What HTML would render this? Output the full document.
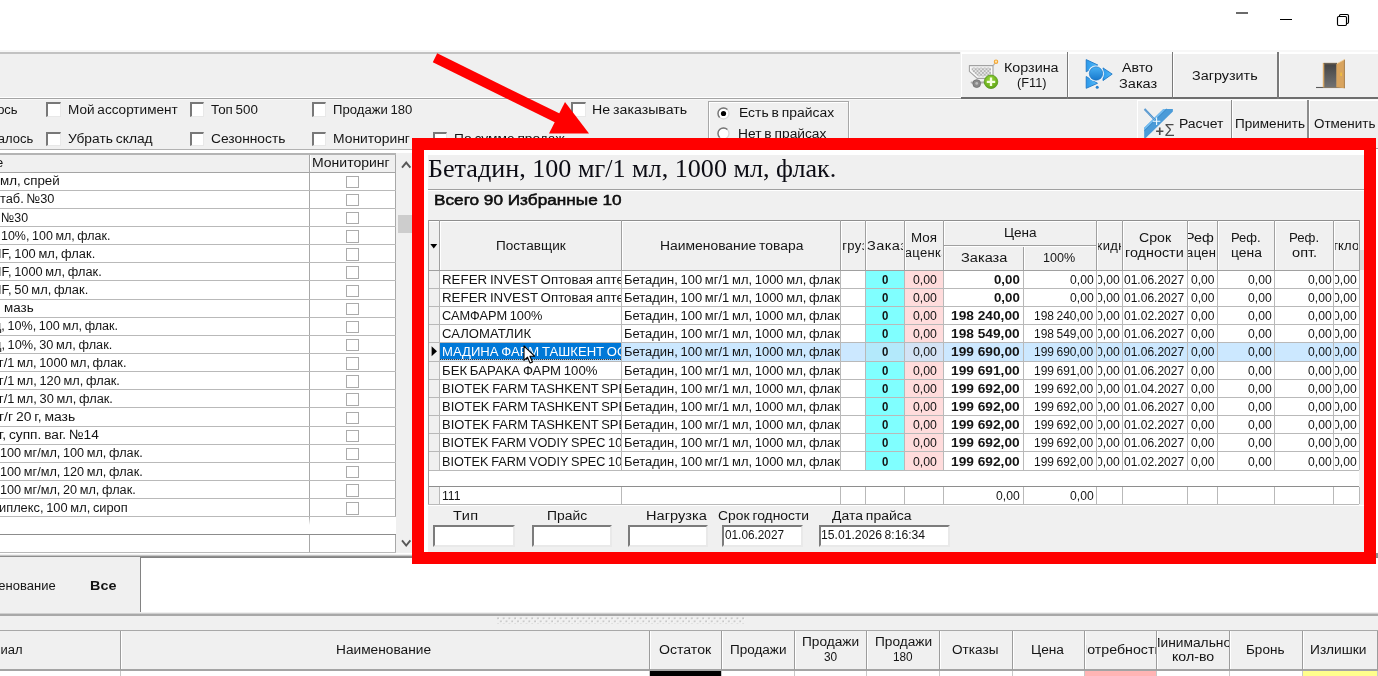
<!DOCTYPE html>
<html lang="ru"><head><meta charset="utf-8"><title>Заказ</title><style>
html,body{margin:0;padding:0}body{width:1378px;height:676px;overflow:hidden;background:#fff;position:relative;font-family:"Liberation Sans",sans-serif;font-size:13px;color:#141414}
#w{position:absolute;left:0;top:0;width:1378px;height:676px;overflow:hidden;will-change:transform}
#w div,#w svg,#w span{position:absolute}
.t{white-space:pre;transform-origin:0 12.5px;word-spacing:-.9px}
.c{overflow:hidden}
.cb{background:#fff;box-sizing:border-box;border:solid;border-width:2px 1.5px 1.5px 2px;border-color:#787878 #e8e8e8 #e8e8e8 #787878}
.cb2{width:13px;height:12.5px;box-sizing:border-box;border:1px solid #ababab;background:#fff}
.in{background:#fff;box-sizing:border-box;border:2px solid;border-color:#7c7c7c #e9e9e9 #e9e9e9 #7c7c7c}
</style></head><body><div id="w">
<div style="left:0px;top:52px;width:1378px;height:505px;background:#f0f0f0;"></div>
<div style="left:0px;top:50.4px;width:1378px;height:1.6px;background:#f7f7f7;"></div>
<div style="left:0px;top:52.2px;width:960px;height:1.7px;background:#c2c2c2;"></div>
<div style="left:0px;top:97px;width:961px;height:1px;background:#ffffff;"></div>
<div style="left:0px;top:98px;width:961px;height:1px;background:#a4a4a4;"></div>
<div style="left:0px;top:99px;width:1378px;height:1px;background:#f8f8f8;"></div>
<div style="left:1236px;top:12px;width:12px;height:1.5px;background:#6a6a6a;"></div>
<div style="left:1280.2px;top:18.6px;width:11.8px;height:1.1px;background:#000;"></div>
<svg style="left:1336px;top:13px" width="15" height="14" viewBox="0 0 15 14"><path d="M3.5 3.5V2.7Q3.5 1.5 4.7 1.5H11.3Q12.5 1.5 12.5 2.7V9.3Q12.5 10.5 11.3 10.5H10.5" fill="none" stroke="#000" stroke-width="1.15"/><rect x="1.5" y="3.5" width="9" height="9" rx="1.2" fill="#fff" stroke="#000" stroke-width="1.15"/></svg>
<div style="left:960.7px;top:52.4px;width:107.29999999999995px;height:46.50000000000001px;background:#f0f0f0;"></div>
<div style="left:960.7px;top:52.4px;width:107.3px;height:1.2px;background:#fff;"></div>
<div style="left:960.7px;top:52.4px;width:1.3px;height:46.5px;background:#fff;"></div>
<div style="left:960.7px;top:96.7px;width:107.3px;height:2.2px;background:#6e6e6e;"></div>
<div style="left:1066.5px;top:52.4px;width:1.5px;height:46.5px;background:#7a7a7a;"></div>
<div style="left:1068px;top:52.4px;width:105px;height:46.50000000000001px;background:#f0f0f0;"></div>
<div style="left:1068px;top:52.4px;width:105px;height:1.2px;background:#fff;"></div>
<div style="left:1068px;top:52.4px;width:1.3px;height:46.5px;background:#fff;"></div>
<div style="left:1068px;top:96.7px;width:105px;height:2.2px;background:#6e6e6e;"></div>
<div style="left:1171.5px;top:52.4px;width:1.5px;height:46.5px;background:#7a7a7a;"></div>
<div style="left:1173px;top:52.4px;width:105.5px;height:46.50000000000001px;background:#f0f0f0;"></div>
<div style="left:1173px;top:52.4px;width:105.5px;height:1.2px;background:#fff;"></div>
<div style="left:1173px;top:52.4px;width:1.3px;height:46.5px;background:#fff;"></div>
<div style="left:1173px;top:96.7px;width:105.5px;height:2.2px;background:#6e6e6e;"></div>
<div style="left:1277.0px;top:52.4px;width:1.5px;height:46.5px;background:#7a7a7a;"></div>
<div style="left:1278.5px;top:52.4px;width:101.5px;height:46.50000000000001px;background:#f0f0f0;"></div>
<div style="left:1278.5px;top:52.4px;width:101.5px;height:1.2px;background:#fff;"></div>
<div style="left:1278.5px;top:52.4px;width:1.3px;height:46.5px;background:#fff;"></div>
<div style="left:1278.5px;top:96.7px;width:101.5px;height:2.2px;background:#6e6e6e;"></div>
<div style="left:1378.5px;top:52.4px;width:1.5px;height:46.5px;background:#7a7a7a;"></div>
<span class="t" style="left:1003.69px;top:60.00px;font-size:13px;line-height:16px;transform:scale(1.1019,1.04);">Корзина</span>
<span class="t" style="left:1016.59px;top:75.25px;font-size:13px;line-height:16px;transform:scale(0.9808,1.04);">(F11)</span>
<span class="t" style="left:1122.34px;top:60.00px;font-size:13px;line-height:16px;transform:scale(1.0912,1.04);">Авто</span>
<span class="t" style="left:1118.84px;top:75.50px;font-size:13px;line-height:16px;transform:scale(1.1193,1.04);">Заказ</span>
<span class="t" style="left:1192.09px;top:68.00px;font-size:13px;line-height:16px;transform:scale(1.1065,1.04);">Загрузить</span>
<div style="left:1137px;top:100px;width:95px;height:40px;background:#f0f0f0;"></div>
<div style="left:1137px;top:100px;width:95px;height:1px;background:#fff;"></div>
<div style="left:1137px;top:100px;width:1px;height:40px;background:#fff;"></div>
<div style="left:1230.5px;top:100px;width:1.5px;height:40px;background:#8c8c8c;"></div>
<div style="left:1232px;top:100px;width:76.5px;height:40px;background:#f0f0f0;"></div>
<div style="left:1232px;top:100px;width:76.5px;height:1px;background:#fff;"></div>
<div style="left:1232px;top:100px;width:1px;height:40px;background:#fff;"></div>
<div style="left:1307.0px;top:100px;width:1.5px;height:40px;background:#8c8c8c;"></div>
<div style="left:1308.5px;top:100px;width:71.5px;height:40px;background:#f0f0f0;"></div>
<div style="left:1308.5px;top:100px;width:71.5px;height:1px;background:#fff;"></div>
<div style="left:1308.5px;top:100px;width:1px;height:40px;background:#fff;"></div>
<div style="left:1378.5px;top:100px;width:1.5px;height:40px;background:#8c8c8c;"></div>
<span class="t" style="left:1178.84px;top:116.25px;font-size:13px;line-height:16px;transform:scale(1.0742,1.04);">Расчет</span>
<span class="t" style="left:1235.09px;top:116.25px;font-size:13px;line-height:16px;transform:scale(1.0411,1.04);">Применить</span>
<span class="t" style="left:1314.34px;top:116.25px;font-size:13px;line-height:16px;transform:scale(1.0341,1.04);">Отменить</span>
<svg style="left:964px;top:54px" width="40" height="40" viewBox="0 0 40 40">
<defs><pattern id="chk" width="3.6" height="3.6" patternUnits="userSpaceOnUse"><rect width="3.6" height="3.6" fill="#e6e6e6"/><rect width="1.8" height="1.8" fill="#b4b4b4"/><rect x="1.8" y="1.8" width="1.8" height="1.8" fill="#b4b4b4"/></pattern>
<radialGradient id="grn" cx="0.45" cy="0.35" r="0.7"><stop offset="0" stop-color="#9ad83c"/><stop offset="1" stop-color="#5aa012"/></radialGradient></defs>
<path d="M29.2 11.5L31.6 8.4" stroke="#b8b8b8" stroke-width="1.3" fill="none"/>
<path d="M5.4 11.6H29V24.4H13.2L5.4 17.4Z" fill="#fafafa" stroke="#a2a2a2" stroke-width="1.1" stroke-linejoin="round"/>
<path d="M7.6 13.6H27V22.6H14L7.6 16.8Z" fill="url(#chk)"/>
<path d="M7.6 28.4H24" stroke="#b0b0b0" stroke-width="2" stroke-linecap="round"/>
<circle cx="12.7" cy="29.6" r="3.9" fill="#8a8a8a" stroke="#6c6c6c" stroke-width="0.8"/><circle cx="12.7" cy="29.4" r="1.4" fill="#bdbdbd"/>
<circle cx="32" cy="7.7" r="1.7" fill="#fde4b0" stroke="#f4a632" stroke-width="1.1"/>
<circle cx="27" cy="27.8" r="6.8" fill="url(#grn)" stroke="#4c9010" stroke-width="0.7"/>
<path d="M27 23.6V32M22.8 27.8H31.2" stroke="#f4ffe0" stroke-width="2.3"/>
</svg>
<svg style="left:1080px;top:54px" width="40" height="40" viewBox="0 0 40 40">
<defs><linearGradient id="bl" x1="0" y1="0" x2="0" y2="1"><stop offset="0" stop-color="#46b0f4"/><stop offset="1" stop-color="#1878cc"/></linearGradient>
<linearGradient id="bt" x1="0" y1="0" x2="1" y2="0"><stop offset="0" stop-color="#2a98ea"/><stop offset="1" stop-color="#58bcf8"/></linearGradient></defs>
<path d="M6.2 5.6V17.8L17.8 11Z" fill="url(#bt)" stroke="#1f78c6" stroke-width="0.9" stroke-linejoin="round"/>
<path d="M6.2 22.5V34.3L17.5 29.3Z" fill="url(#bt)" stroke="#1f78c6" stroke-width="0.9" stroke-linejoin="round"/>
<path d="M23 13.9V26.6L32.2 20.1Z" fill="url(#bt)" stroke="#1f78c6" stroke-width="0.9" stroke-linejoin="round"/>
<circle cx="16" cy="19.5" r="8.1" fill="#e6f4fd"/>
<circle cx="16" cy="19.5" r="6.7" fill="url(#bl)" stroke="#1a6cb8" stroke-width="0.6"/>
<circle cx="17.2" cy="33.2" r="1.5" fill="#2480d0"/>
</svg>
<svg style="left:1308px;top:54px" width="40" height="40" viewBox="0 0 40 40">
<defs><linearGradient id="dk" x1="0" y1="0" x2="0" y2="1"><stop offset="0" stop-color="#444"/><stop offset="1" stop-color="#727272"/></linearGradient></defs>
<path d="M8 33.5H36.5" stroke="#5a5a5a" stroke-width="1.1"/>
<rect x="14.8" y="8.9" width="14.4" height="24.6" fill="#d8a866"/><rect x="15.8" y="8.9" width="13.2" height="1.2" fill="#6a6256"/>
<rect x="16.3" y="10.1" width="12" height="23.4" fill="url(#dk)"/>
<path d="M29 9.6L36.8 5.3V34.3L29 33.4Z" fill="#d9a45e"/>
<path d="M35.9 5.8L36.8 5.3V34.3L35.9 34.2Z" fill="#a47c4c"/>
<path d="M29 9.6L36.8 5.3" stroke="#f4d8a8" stroke-width="0.8"/>
<rect x="32.4" y="18.6" width="1.4" height="3.4" fill="#f2c23c"/>
</svg>
<svg style="left:1138px;top:100px" width="40" height="38" viewBox="0 0 40 38">
<path d="M25.4 8.9H34.9V11.5L7.7 38H6.2V27.8Z" fill="#4b9bd8"/>
<path d="M25.4 8.9H28.2L6.2 30.6V27.8Z" fill="#74bcf0"/>
<path d="M28.6 8.9L6.2 31" stroke="#2f7fc0" stroke-width="0.7" fill="none"/>
<path d="M6.5 9L16.4 19.4" stroke="#3c86c6" stroke-width="1.9"/><path d="M6.5 9L16.4 19.4" stroke="#bcdcf4" stroke-width="0.5"/>
<path d="M18.6 17.6V25M14.9 21.3H22.3" stroke="#f2fbff" stroke-width="1.1"/>
<text x="17.6" y="35.8" font-family="Liberation Sans, sans-serif" font-size="14.5" fill="#4a4a4a"><tspan font-weight="700">+</tspan><tspan x="26.4" font-size="16.4">Σ</tspan></text>
</svg>

<div class="cb" style="left:46.25px;top:102px;width:14.5px;height:14.5px"></div>
<div class="cb" style="left:189.5px;top:102px;width:14.5px;height:14.5px"></div>
<div class="cb" style="left:311.5px;top:102px;width:14.5px;height:14.5px"></div>
<div class="cb" style="left:46.25px;top:131.5px;width:14.5px;height:14.5px"></div>
<div class="cb" style="left:189.5px;top:131.5px;width:14.5px;height:14.5px"></div>
<div class="cb" style="left:311.5px;top:131.5px;width:14.5px;height:14.5px"></div>
<div class="cb" style="left:432.5px;top:131.5px;width:14.5px;height:14.5px"></div>
<div class="cb" style="left:571.25px;top:102px;width:14.5px;height:14.5px"></div>
<span class="t" style="left:-2.87px;top:101.50px;font-size:13px;line-height:16px;transform:scale(1.0000,1.04);">ось</span>
<span class="t" style="left:-2.32px;top:130.75px;font-size:13px;line-height:16px;transform:scale(1.0000,1.04);">алось</span>
<span class="t" style="left:67.84px;top:101.50px;font-size:13px;line-height:16px;transform:scale(1.0421,1.04);">Мой ассортимент</span>
<span class="t" style="left:67.84px;top:130.75px;font-size:13px;line-height:16px;transform:scale(1.0614,1.04);">Убрать склад</span>
<span class="t" style="left:211.09px;top:101.50px;font-size:13px;line-height:16px;transform:scale(1.0290,1.04);">Топ 500</span>
<span class="t" style="left:211.09px;top:130.75px;font-size:13px;line-height:16px;transform:scale(1.0602,1.04);">Сезонность</span>
<span class="t" style="left:332.84px;top:101.50px;font-size:13px;line-height:16px;transform:scale(1.0092,1.04);">Продажи 180</span>
<span class="t" style="left:332.84px;top:130.75px;font-size:13px;line-height:16px;transform:scale(1.0669,1.04);">Мониторинг</span>
<span class="t" style="left:453.59px;top:130.75px;font-size:13px;line-height:16px;transform:scale(1.0572,1.04);">По сумме продаж</span>
<span class="t" style="left:591.59px;top:101.50px;font-size:13px;line-height:16px;transform:scale(1.0899,1.04);">Не заказывать</span>
<div style="left:707.6px;top:101px;width:139.6px;height:50px;border:1px solid #a8a8a8;box-shadow:inset 1px 1px 0 #fff,1px 1px 0 #fff;background:none"></div>
<svg style="left:716.5px;top:106.75px" width="13" height="13"><circle cx="6.5" cy="6.5" r="5.5" fill="#fff" stroke="#d8d8d8" stroke-width="1.3"/><path d="M2.6 10.4A5.5 5.5 0 0 1 10.4 2.6" fill="none" stroke="#767676" stroke-width="1.4"/><circle cx="6.5" cy="6.5" r="2.6" fill="#000"/></svg>
<svg style="left:716.5px;top:127.0px" width="13" height="13"><circle cx="6.5" cy="6.5" r="5.5" fill="#fff" stroke="#d8d8d8" stroke-width="1.3"/><path d="M2.6 10.4A5.5 5.5 0 0 1 10.4 2.6" fill="none" stroke="#767676" stroke-width="1.4"/></svg>
<span class="t" style="left:738.59px;top:105.00px;font-size:13px;line-height:16px;transform:scale(1.0685,1.04);">Есть в прайсах</span>
<span class="t" style="left:738.09px;top:125.75px;font-size:13px;line-height:16px;transform:scale(1.0594,1.04);">Нет в прайсах</span>
<div style="left:0px;top:153px;width:396px;height:401px;background:#fff;"></div>
<div style="left:0px;top:149px;width:412px;height:1.3px;background:#b2b2b2;"></div>
<div style="left:0px;top:150.3px;width:412px;height:3px;background:#fff;"></div>
<div style="left:0px;top:153.2px;width:396px;height:1.6px;background:#b4b4b4;"></div>
<div style="left:0px;top:154.8px;width:396px;height:17px;background:#f0f0f0;"></div>
<div style="left:0px;top:171.5px;width:396px;height:1.4px;background:#a4a4a4;"></div>
<div style="left:309px;top:154.8px;width:1px;height:362.2px;background:#a8a8a8;"></div>
<div style="left:310px;top:154.8px;width:1px;height:16.7px;background:#fff;"></div>
<div style="left:309px;top:534px;width:1px;height:19px;background:#a8a8a8;"></div>
<div style="left:395px;top:154.8px;width:1px;height:362.2px;background:#a8a8a8;"></div>
<div style="left:395px;top:534px;width:1px;height:19px;background:#a8a8a8;"></div>
<div style="left:309px;top:517px;width:1px;height:8px;background:linear-gradient(#a8a8a8,#fff)"></div>
<span class="t" style="left:-4.08px;top:155.25px;font-size:13px;line-height:16px;transform:scale(1.0000,1.04);">е</span>
<span class="t" style="left:311.59px;top:155.25px;font-size:13px;line-height:16px;transform:scale(1.0773,1.04);">Мониторинг</span>
<div style="left:0px;top:190px;width:396px;height:1px;background:#b9b9b9;"></div>
<span class="t" style="left:0.39px;top:173.25px;font-size:13px;line-height:16px;transform:scale(1.0279,1.04);">мл, спрей</span>
<div class="cb2" style="left:345.5px;top:175.6px"></div>
<div style="left:0px;top:208px;width:396px;height:1px;background:#b9b9b9;"></div>
<span class="t" style="left:0.39px;top:191.39px;font-size:13px;line-height:16px;transform:scale(0.9857,1.04);">таб. №30</span>
<div class="cb2" style="left:345.5px;top:193.7px"></div>
<div style="left:0px;top:226px;width:396px;height:1px;background:#b9b9b9;"></div>
<span class="t" style="left:1.09px;top:209.54px;font-size:13px;line-height:16px;transform:scale(0.9516,1.04);">№30</span>
<div class="cb2" style="left:345.5px;top:211.9px"></div>
<div style="left:0px;top:244px;width:396px;height:1px;background:#b9b9b9;"></div>
<span class="t" style="left:1.49px;top:227.68px;font-size:13px;line-height:16px;transform:scale(0.9589,1.04);">10%, 100 мл, флак.</span>
<div class="cb2" style="left:345.5px;top:230.0px"></div>
<div style="left:0px;top:262px;width:396px;height:1px;background:#b9b9b9;"></div>
<span class="t" style="left:-2.31px;top:245.83px;font-size:13px;line-height:16px;transform:scale(0.9899,1.04);">IF, 100 мл, флак.</span>
<div class="cb2" style="left:345.5px;top:248.2px"></div>
<div style="left:0px;top:280px;width:396px;height:1px;background:#b9b9b9;"></div>
<span class="t" style="left:-2.31px;top:263.97px;font-size:13px;line-height:16px;transform:scale(0.9837,1.04);">IF, 1000 мл, флак.</span>
<div class="cb2" style="left:345.5px;top:266.3px"></div>
<div style="left:0px;top:299px;width:396px;height:1px;background:#b9b9b9;"></div>
<span class="t" style="left:-2.31px;top:282.12px;font-size:13px;line-height:16px;transform:scale(0.9917,1.04);">IF, 50 мл, флак.</span>
<div class="cb2" style="left:345.5px;top:284.5px"></div>
<div style="left:0px;top:317px;width:396px;height:1px;background:#b9b9b9;"></div>
<span class="t" style="left:3.69px;top:300.26px;font-size:13px;line-height:16px;transform:scale(1.0300,1.04);">мазь</span>
<div class="cb2" style="left:345.5px;top:302.6px"></div>
<div style="left:0px;top:335px;width:396px;height:1px;background:#b9b9b9;"></div>
<span class="t" style="left:-6.41px;top:318.41px;font-size:13px;line-height:16px;transform:scale(0.9695,1.04);">д, 10%, 100 мл, флак.</span>
<div class="cb2" style="left:345.5px;top:320.8px"></div>
<div style="left:0px;top:353px;width:396px;height:1px;background:#b9b9b9;"></div>
<span class="t" style="left:-6.41px;top:336.55px;font-size:13px;line-height:16px;transform:scale(0.9788,1.04);">д, 10%, 30 мл, флак.</span>
<div class="cb2" style="left:345.5px;top:338.9px"></div>
<div style="left:0px;top:371px;width:396px;height:1px;background:#b9b9b9;"></div>
<span class="t" style="left:-1.11px;top:354.70px;font-size:13px;line-height:16px;transform:scale(0.9791,1.04);">г/1 мл, 1000 мл, флак.</span>
<div class="cb2" style="left:345.5px;top:357.1px"></div>
<div style="left:0px;top:389px;width:396px;height:1px;background:#b9b9b9;"></div>
<span class="t" style="left:-1.11px;top:372.84px;font-size:13px;line-height:16px;transform:scale(0.9838,1.04);">г/1 мл, 120 мл, флак.</span>
<div class="cb2" style="left:345.5px;top:375.2px"></div>
<div style="left:0px;top:407px;width:396px;height:1px;background:#b9b9b9;"></div>
<span class="t" style="left:-1.11px;top:390.99px;font-size:13px;line-height:16px;transform:scale(0.9848,1.04);">г/1 мл, 30 мл, флак.</span>
<div class="cb2" style="left:345.5px;top:393.3px"></div>
<div style="left:0px;top:426px;width:396px;height:1px;background:#b9b9b9;"></div>
<span class="t" style="left:-1.11px;top:409.13px;font-size:13px;line-height:16px;transform:scale(1.0704,1.04);">г/г 20 г, мазь</span>
<div class="cb2" style="left:345.5px;top:411.5px"></div>
<div style="left:0px;top:444px;width:396px;height:1px;background:#b9b9b9;"></div>
<span class="t" style="left:-1.31px;top:427.28px;font-size:13px;line-height:16px;transform:scale(1.0534,1.04);">г, супп. ваг. №14</span>
<div class="cb2" style="left:345.5px;top:429.6px"></div>
<div style="left:0px;top:462px;width:396px;height:1px;background:#b9b9b9;"></div>
<span class="t" style="left:-0.51px;top:445.42px;font-size:13px;line-height:16px;transform:scale(0.9754,1.04);">100 мг/мл, 100 мл, флак.</span>
<div class="cb2" style="left:345.5px;top:447.8px"></div>
<div style="left:0px;top:480px;width:396px;height:1px;background:#b9b9b9;"></div>
<span class="t" style="left:-0.51px;top:463.57px;font-size:13px;line-height:16px;transform:scale(0.9754,1.04);">100 мг/мл, 120 мл, флак.</span>
<div class="cb2" style="left:345.5px;top:465.9px"></div>
<div style="left:0px;top:498px;width:396px;height:1px;background:#b9b9b9;"></div>
<span class="t" style="left:-0.51px;top:481.71px;font-size:13px;line-height:16px;transform:scale(0.9758,1.04);">100 мг/мл, 20 мл, флак.</span>
<div class="cb2" style="left:345.5px;top:484.1px"></div>
<div style="left:0px;top:516px;width:396px;height:1px;background:#b9b9b9;"></div>
<span class="t" style="left:-0.91px;top:499.86px;font-size:13px;line-height:16px;transform:scale(0.9880,1.04);">иплекс, 100 мл, сироп</span>
<div class="cb2" style="left:345.5px;top:502.2px"></div>
<div style="left:0px;top:533.8px;width:396px;height:1px;background:#8c8c8c;"></div>
<div style="left:0px;top:552px;width:396px;height:1px;background:#b9b9b9;"></div>
<div style="left:396px;top:153px;width:16px;height:401px;background:#f0f0f0;"></div>
<div style="left:397.5px;top:214.5px;width:14.5px;height:18.5px;background:#cdcdcd;"></div>
<svg style="left:400px;top:160px" width="13" height="10"><path d="M2 7.6L6.2 2.6L10.4 7.6" fill="none" stroke="#585858" stroke-width="1.9"/></svg>
<svg style="left:400px;top:538px" width="13" height="10"><path d="M2 2.4L6.2 7.6L10.4 2.4" fill="none" stroke="#585858" stroke-width="1.9"/></svg>
<div style="left:0px;top:553px;width:412px;height:1px;background:#fff;"></div>
<div style="left:0px;top:554.6px;width:412px;height:1px;background:#c6c6c6;"></div>
<div style="left:0px;top:555.6px;width:412px;height:1.4px;background:#8e8e8e;"></div>
<div style="left:0px;top:557px;width:1378px;height:56px;background:#f0f0f0;"></div>
<div style="left:141px;top:558px;width:1240px;height:54px;background:#fff;"></div>
<div style="left:140px;top:557px;width:1.3px;height:55px;background:#828282;"></div>
<div style="left:140px;top:557px;width:1238px;height:1.2px;background:#828282;"></div>
<span class="t" style="left:-1.66px;top:577.50px;font-size:13px;line-height:16px;transform:scale(1.0000,1.04);">енование</span>
<span class="t" style="left:89.59px;top:577.50px;font-size:13px;line-height:16px;font-weight:700;word-spacing:0;transform:scale(1.1077,1.04);">Все</span>
<div style="left:0px;top:613px;width:1378px;height:2.5px;background:#a8a8a8;"></div>
<div style="left:0px;top:613px;width:1378px;height:1px;background:#cfcfcf;"></div>
<div style="left:0px;top:615.5px;width:1378px;height:14px;background:#f0f0f0;"></div>
<svg style="left:497px;top:616.5px" width="248" height="7"><defs><pattern id="grip" width="5.7" height="6.2" patternUnits="userSpaceOnUse"><rect x="0.9" y="1.1" width="1.5" height="1.5" fill="#fff"/><rect x="0.3" y="0.5" width="1.5" height="1.5" fill="#b4b4b4"/><rect x="3.75" y="4.2" width="1.5" height="1.5" fill="#fff"/><rect x="3.15" y="3.6" width="1.5" height="1.5" fill="#b4b4b4"/></pattern></defs><rect width="248" height="7" fill="url(#grip)"/></svg>
<div style="left:0px;top:630px;width:1378px;height:40px;background:#f0f0f0;"></div>
<div style="left:0px;top:629.6px;width:1378px;height:1.1px;background:#a8a8a8;"></div>
<div style="left:0px;top:669.2px;width:1378px;height:1.4px;background:#a4a4a4;"></div>
<div style="left:0px;top:671px;width:1378px;height:5px;background:#fff;"></div>
<div style="left:119.5px;top:630.5px;width:1px;height:39.0px;background:#9c9c9c;"></div>
<div style="left:120.5px;top:630.7px;width:1px;height:38.5px;background:#fff;"></div>
<div style="left:119.5px;top:670.6px;width:1px;height:5.4px;background:#c8c8c8;"></div>
<div style="left:649px;top:630.5px;width:1px;height:39.0px;background:#9c9c9c;"></div>
<div style="left:650px;top:630.7px;width:1px;height:38.5px;background:#fff;"></div>
<div style="left:649px;top:670.6px;width:1px;height:5.4px;background:#c8c8c8;"></div>
<div style="left:721.1px;top:630.5px;width:1px;height:39.0px;background:#9c9c9c;"></div>
<div style="left:722.1px;top:630.7px;width:1px;height:38.5px;background:#fff;"></div>
<div style="left:721.1px;top:670.6px;width:1px;height:5.4px;background:#c8c8c8;"></div>
<div style="left:794px;top:630.5px;width:1px;height:39.0px;background:#9c9c9c;"></div>
<div style="left:795px;top:630.7px;width:1px;height:38.5px;background:#fff;"></div>
<div style="left:794px;top:670.6px;width:1px;height:5.4px;background:#c8c8c8;"></div>
<div style="left:866.25px;top:630.5px;width:1px;height:39.0px;background:#9c9c9c;"></div>
<div style="left:867.25px;top:630.7px;width:1px;height:38.5px;background:#fff;"></div>
<div style="left:866.25px;top:670.6px;width:1px;height:5.4px;background:#c8c8c8;"></div>
<div style="left:939px;top:630.5px;width:1px;height:39.0px;background:#9c9c9c;"></div>
<div style="left:940px;top:630.7px;width:1px;height:38.5px;background:#fff;"></div>
<div style="left:939px;top:670.6px;width:1px;height:5.4px;background:#c8c8c8;"></div>
<div style="left:1011.5px;top:630.5px;width:1px;height:39.0px;background:#9c9c9c;"></div>
<div style="left:1012.5px;top:630.7px;width:1px;height:38.5px;background:#fff;"></div>
<div style="left:1011.5px;top:670.6px;width:1px;height:5.4px;background:#c8c8c8;"></div>
<div style="left:1083.5px;top:630.5px;width:1px;height:39.0px;background:#9c9c9c;"></div>
<div style="left:1084.5px;top:630.7px;width:1px;height:38.5px;background:#fff;"></div>
<div style="left:1083.5px;top:670.6px;width:1px;height:5.4px;background:#c8c8c8;"></div>
<div style="left:1156px;top:630.5px;width:1px;height:39.0px;background:#9c9c9c;"></div>
<div style="left:1157px;top:630.7px;width:1px;height:38.5px;background:#fff;"></div>
<div style="left:1156px;top:670.6px;width:1px;height:5.4px;background:#c8c8c8;"></div>
<div style="left:1228.5px;top:630.5px;width:1px;height:39.0px;background:#9c9c9c;"></div>
<div style="left:1229.5px;top:630.7px;width:1px;height:38.5px;background:#fff;"></div>
<div style="left:1228.5px;top:670.6px;width:1px;height:5.4px;background:#c8c8c8;"></div>
<div style="left:1301.5px;top:630.5px;width:1px;height:39.0px;background:#9c9c9c;"></div>
<div style="left:1302.5px;top:630.7px;width:1px;height:38.5px;background:#fff;"></div>
<div style="left:1301.5px;top:670.6px;width:1px;height:5.4px;background:#c8c8c8;"></div>
<div style="left:1376.5px;top:630.5px;width:1px;height:39.0px;background:#9c9c9c;"></div>
<div style="left:1377.5px;top:630.7px;width:1px;height:38.5px;background:#fff;"></div>
<div style="left:1376.5px;top:670.6px;width:1px;height:5.4px;background:#c8c8c8;"></div>
<div style="left:650px;top:670.8px;width:71.1px;height:6px;background:#000;"></div>
<div style="left:1084.5px;top:670.8px;width:71.5px;height:6px;background:#ffb4b4;"></div>
<div style="left:1302.5px;top:670.8px;width:74px;height:6px;background:#ffff8c;"></div>
<span class="t" style="left:0.57px;top:641.50px;font-size:13px;line-height:16px;transform:scale(1.0000,1.04);">иал</span>
<span class="t" style="left:336.09px;top:641.50px;font-size:13px;line-height:16px;transform:scale(1.0544,1.04);">Наименование</span>
<span class="t" style="left:659.09px;top:641.50px;font-size:13px;line-height:16px;transform:scale(1.0850,1.04);">Остаток</span>
<span class="t" style="left:729.59px;top:641.50px;font-size:13px;line-height:16px;transform:scale(1.0393,1.04);">Продажи</span>
<span class="t" style="left:802.09px;top:634.00px;font-size:13px;line-height:16px;transform:scale(1.0531,1.04);">Продажи</span>
<span class="t" style="left:823.59px;top:648.50px;font-size:13px;line-height:16px;transform:scale(0.9109,1.04);">30</span>
<span class="t" style="left:874.59px;top:634.00px;font-size:13px;line-height:16px;transform:scale(1.0531,1.04);">Продажи</span>
<span class="t" style="left:892.84px;top:648.50px;font-size:13px;line-height:16px;transform:scale(0.9068,1.04);">180</span>
<span class="t" style="left:952.09px;top:641.50px;font-size:13px;line-height:16px;transform:scale(1.0448,1.04);">Отказы</span>
<span class="t" style="left:1031.09px;top:641.50px;font-size:13px;line-height:16px;transform:scale(1.0532,1.04);">Цена</span>
<div class="c" style="left:1085.6px;top:632px;width:70.40000000000009px;height:36px"><span class="t" style="left:-8.91px;top:9.50px;font-size:13px;line-height:16px;transform:scale(1.0925,1.04);">Потребность</span></div>
<div class="c" style="left:1158px;top:632px;width:70.5px;height:36px"><span class="t" style="left:-9.31px;top:2.50px;font-size:13px;line-height:16px;transform:scale(1.0595,1.04);">Минимальное</span></div>
<span class="t" style="left:1171.84px;top:649.00px;font-size:13px;line-height:16px;transform:scale(1.0903,1.04);">кол-во</span>
<span class="t" style="left:1245.59px;top:641.50px;font-size:13px;line-height:16px;transform:scale(1.0400,1.04);">Бронь</span>
<span class="t" style="left:1310.09px;top:641.50px;font-size:13px;line-height:16px;transform:scale(1.0569,1.04);">Излишки</span>
<div style="left:1376px;top:149px;width:2px;height:408px;background:#fff;"></div>
<div style="left:1376px;top:147.5px;width:2px;height:1.5px;background:#9c9c9c;"></div>
<div style="left:1376px;top:553px;width:2px;height:3.5px;background:#8e8e8e;"></div>
<div style="left:412px;top:138px;width:964px;height:426px;background:#ff0000;"></div>
<div style="left:424px;top:150px;width:940px;height:402px;background:#fff;"></div>
<div style="left:428px;top:154.5px;width:936px;height:397.5px;background:#f0f0f0;"></div>
<div style="left:428px;top:188.5px;width:936px;height:1px;background:#a0a0a0;"></div>
<div style="left:428px;top:189.5px;width:936px;height:1px;background:#fff;"></div>
<span class="t" style="left:427.78px;top:152.72px;font-size:26px;line-height:32px;font-family:'Liberation Serif',serif;word-spacing:0;color:#0c0c14;transform:scaleX(1.0048);">Бетадин, 100 мг/1 мл, 1000 мл, флак.</span>
<span class="t" style="left:433.62px;top:190.13px;font-size:15.5px;line-height:19px;word-spacing:0;-webkit-text-stroke:0.5px #000;transform:scaleX(1.1093);">Всего 90 Избранные 10</span>
<div style="left:428px;top:220px;width:931px;height:50px;background:#f0f0f0;"></div>
<div style="left:439.5px;top:270px;width:919.5px;height:200px;background:#fff;"></div>
<div style="left:428px;top:270px;width:11.2px;height:200px;background:#f0f0f0;"></div>
<div style="left:865.8px;top:270px;width:38.1px;height:200px;background:#80ffff;"></div>
<div style="left:904.9px;top:270px;width:38px;height:200px;background:#ffdcdc;"></div>
<div style="left:439.8px;top:342.72px;width:919.2px;height:18.18px;background:#cce8ff;"></div>
<div style="left:865.8px;top:342.72px;width:38.1px;height:18.18px;background:#b3e9fb;"></div>
<div style="left:904.9px;top:342.72px;width:38px;height:18.18px;background:#d3e3f5;"></div>
<div style="left:439.6px;top:343.22px;width:181.2px;height:16px;background:#0078d7;"></div>
<div style="left:439.6px;top:359.12px;width:181.2px;height:1.2px;background:repeating-linear-gradient(90deg,#3a3a3a 0 1px,#9ab8d8 1px 2px)"></div>
<div style="left:428px;top:287.8px;width:931px;height:1px;background:#b9b9b9;"></div>
<div style="left:428px;top:306.0px;width:931px;height:1px;background:#b9b9b9;"></div>
<div style="left:428px;top:324.1px;width:931px;height:1px;background:#b9b9b9;"></div>
<div style="left:428px;top:342.3px;width:931px;height:1px;background:#b9b9b9;"></div>
<div style="left:428px;top:360.5px;width:931px;height:1px;background:#b9b9b9;"></div>
<div style="left:428px;top:378.7px;width:931px;height:1px;background:#b9b9b9;"></div>
<div style="left:428px;top:396.9px;width:931px;height:1px;background:#b9b9b9;"></div>
<div style="left:428px;top:415.0px;width:931px;height:1px;background:#b9b9b9;"></div>
<div style="left:428px;top:433.2px;width:931px;height:1px;background:#b9b9b9;"></div>
<div style="left:428px;top:451.4px;width:931px;height:1px;background:#b9b9b9;"></div>
<div style="left:428px;top:469.6px;width:931px;height:1px;background:#b9b9b9;"></div>
<div style="left:427.5px;top:219.5px;width:932.0px;height:1.2px;background:#8e8e8e;"></div>
<div style="left:428.5px;top:220.7px;width:930.5px;height:1px;background:#fff;"></div>
<div style="left:427.5px;top:220px;width:1.1px;height:50px;background:#a0a0a0;"></div>
<div style="left:427.5px;top:270px;width:1px;height:200px;background:#b9b9b9;"></div>
<div style="left:438.8px;top:220px;width:1.1px;height:50px;background:#a0a0a0;"></div>
<div style="left:439.90000000000003px;top:220.7px;width:1px;height:49.3px;background:#fff;"></div>
<div style="left:438.8px;top:270px;width:1px;height:200px;background:#b9b9b9;"></div>
<div style="left:620.7px;top:220px;width:1.1px;height:50px;background:#a0a0a0;"></div>
<div style="left:621.8000000000001px;top:220.7px;width:1px;height:49.3px;background:#fff;"></div>
<div style="left:620.7px;top:270px;width:1px;height:200px;background:#b9b9b9;"></div>
<div style="left:840.25px;top:220px;width:1.1px;height:50px;background:#a0a0a0;"></div>
<div style="left:841.35px;top:220.7px;width:1px;height:49.3px;background:#fff;"></div>
<div style="left:840.25px;top:270px;width:1px;height:200px;background:#b9b9b9;"></div>
<div style="left:864.8px;top:220px;width:1.1px;height:50px;background:#a0a0a0;"></div>
<div style="left:865.9px;top:220.7px;width:1px;height:49.3px;background:#fff;"></div>
<div style="left:864.8px;top:270px;width:1px;height:200px;background:#b9b9b9;"></div>
<div style="left:903.9px;top:220px;width:1.1px;height:50px;background:#a0a0a0;"></div>
<div style="left:905.0px;top:220.7px;width:1px;height:49.3px;background:#fff;"></div>
<div style="left:903.9px;top:270px;width:1px;height:200px;background:#b9b9b9;"></div>
<div style="left:942.9px;top:220px;width:1.1px;height:50px;background:#a0a0a0;"></div>
<div style="left:944.0px;top:220.7px;width:1px;height:49.3px;background:#fff;"></div>
<div style="left:942.9px;top:270px;width:1px;height:200px;background:#b9b9b9;"></div>
<div style="left:1022.5px;top:245px;width:1.1px;height:25px;background:#a0a0a0;"></div>
<div style="left:1023.6px;top:246px;width:1px;height:24px;background:#fff;"></div>
<div style="left:1022.5px;top:270px;width:1px;height:200px;background:#b9b9b9;"></div>
<div style="left:1095.9px;top:220px;width:1.1px;height:50px;background:#a0a0a0;"></div>
<div style="left:1097.0px;top:220.7px;width:1px;height:49.3px;background:#fff;"></div>
<div style="left:1095.9px;top:270px;width:1px;height:200px;background:#b9b9b9;"></div>
<div style="left:1121.5px;top:220px;width:1.1px;height:50px;background:#a0a0a0;"></div>
<div style="left:1122.6px;top:220.7px;width:1px;height:49.3px;background:#fff;"></div>
<div style="left:1121.5px;top:270px;width:1px;height:200px;background:#b9b9b9;"></div>
<div style="left:1186.7px;top:220px;width:1.1px;height:50px;background:#a0a0a0;"></div>
<div style="left:1187.8px;top:220.7px;width:1px;height:49.3px;background:#fff;"></div>
<div style="left:1186.7px;top:270px;width:1px;height:200px;background:#b9b9b9;"></div>
<div style="left:1216.9px;top:220px;width:1.1px;height:50px;background:#a0a0a0;"></div>
<div style="left:1218.0px;top:220.7px;width:1px;height:49.3px;background:#fff;"></div>
<div style="left:1216.9px;top:270px;width:1px;height:200px;background:#b9b9b9;"></div>
<div style="left:1274.0px;top:220px;width:1.1px;height:50px;background:#a0a0a0;"></div>
<div style="left:1275.1px;top:220.7px;width:1px;height:49.3px;background:#fff;"></div>
<div style="left:1274.0px;top:270px;width:1px;height:200px;background:#b9b9b9;"></div>
<div style="left:1333.3px;top:220px;width:1.1px;height:50px;background:#a0a0a0;"></div>
<div style="left:1334.3999999999999px;top:220.7px;width:1px;height:49.3px;background:#fff;"></div>
<div style="left:1333.3px;top:270px;width:1px;height:200px;background:#b9b9b9;"></div>
<div style="left:1358.5px;top:220px;width:1.1px;height:50px;background:#a0a0a0;"></div>
<div style="left:1358.5px;top:270px;width:1px;height:200px;background:#b9b9b9;"></div>
<div style="left:427.5px;top:269.7px;width:932.0px;height:1.2px;background:#a0a0a0;"></div>
<div style="left:427.5px;top:220px;width:1px;height:250px;background:#a0a0a0;"></div>
<div style="left:943.9px;top:245.1px;width:152.0px;height:1px;background:#a0a0a0;"></div>
<div style="left:943.9px;top:246.1px;width:152.0px;height:1px;background:#fff;"></div>
<div style="left:428px;top:470.5px;width:931px;height:15.5px;background:#fff;"></div>
<div style="left:428px;top:486px;width:931px;height:18.5px;background:#fff;"></div>
<div style="left:428px;top:485.5px;width:931px;height:1.3px;background:#8e8e8e;"></div>
<div style="left:428px;top:504px;width:931px;height:1px;background:#b9b9b9;"></div>
<div style="left:429px;top:487px;width:10.75px;height:17px;background:#f0f0f0;"></div>
<div style="left:427.5px;top:486.5px;width:1px;height:17.5px;background:#b9b9b9;"></div>
<div style="left:438.8px;top:486.5px;width:1px;height:17.5px;background:#b9b9b9;"></div>
<div style="left:620.7px;top:486.5px;width:1px;height:17.5px;background:#b9b9b9;"></div>
<div style="left:840.25px;top:486.5px;width:1px;height:17.5px;background:#b9b9b9;"></div>
<div style="left:864.8px;top:486.5px;width:1px;height:17.5px;background:#b9b9b9;"></div>
<div style="left:903.9px;top:486.5px;width:1px;height:17.5px;background:#b9b9b9;"></div>
<div style="left:942.9px;top:486.5px;width:1px;height:17.5px;background:#b9b9b9;"></div>
<div style="left:1022.5px;top:486.5px;width:1px;height:17.5px;background:#b9b9b9;"></div>
<div style="left:1095.9px;top:486.5px;width:1px;height:17.5px;background:#b9b9b9;"></div>
<div style="left:1121.5px;top:486.5px;width:1px;height:17.5px;background:#b9b9b9;"></div>
<div style="left:1186.7px;top:486.5px;width:1px;height:17.5px;background:#b9b9b9;"></div>
<div style="left:1216.9px;top:486.5px;width:1px;height:17.5px;background:#b9b9b9;"></div>
<div style="left:1274.0px;top:486.5px;width:1px;height:17.5px;background:#b9b9b9;"></div>
<div style="left:1333.3px;top:486.5px;width:1px;height:17.5px;background:#b9b9b9;"></div>
<div style="left:1358.5px;top:486.5px;width:1px;height:17.5px;background:#b9b9b9;"></div>
<div style="left:427.5px;top:470px;width:1px;height:34px;background:#a0a0a0;"></div>
<div style="left:428px;top:505px;width:936px;height:1px;background:#fff;"></div>
<div style="left:1360px;top:250px;width:4px;height:20px;background:#dadada;"></div>
<span class="t" style="left:495.84px;top:237.50px;font-size:13px;line-height:16px;transform:scale(1.0451,1.04);">Поставщик</span>
<span class="t" style="left:659.84px;top:237.50px;font-size:13px;line-height:16px;transform:scale(1.0678,1.04);">Наименование товара</span>
<div class="c" style="left:841.8px;top:222px;width:22.5px;height:46px"><span class="t" style="left:-17.05px;top:15.50px;font-size:13px;line-height:16px;letter-spacing:0.400px;transform:scale(1.0000,1.04);">Нагрузка</span></div>
<div class="c" style="left:866.3px;top:222px;width:37.200000000000045px;height:46px"><span class="t" style="left:0.69px;top:15.50px;font-size:13px;line-height:16px;letter-spacing:0.363px;transform:scale(1.1200,1.04);">Заказ</span></div>
<span class="t" style="left:911.09px;top:229.50px;font-size:13px;line-height:16px;transform:scale(1.0269,1.04);">Моя</span>
<div class="c" style="left:905.6px;top:222px;width:36.89999999999998px;height:46px"><span class="t" style="left:-8.26px;top:23.00px;font-size:13px;line-height:16px;letter-spacing:0.300px;transform:scale(1.0000,1.04);">наценка</span></div>
<span class="t" style="left:1003.84px;top:225.00px;font-size:13px;line-height:16px;transform:scale(1.0452,1.04);">Цена</span>
<span class="t" style="left:960.59px;top:249.50px;font-size:13px;line-height:16px;letter-spacing:0.022px;transform:scale(1.1200,1.04);">Заказа</span>
<span class="t" style="left:1043.09px;top:249.50px;font-size:13px;line-height:16px;transform:scale(0.9678,1.04);">100%</span>
<div class="c" style="left:1097.6px;top:222px;width:23.40000000000009px;height:46px"><span class="t" style="left:-10.77px;top:15.50px;font-size:13px;line-height:16px;letter-spacing:0.400px;transform:scale(1.0000,1.04);">Скидка</span></div>
<span class="t" style="left:1138.59px;top:229.50px;font-size:13px;line-height:16px;transform:scale(1.0891,1.04);">Срок</span>
<span class="t" style="left:1125.09px;top:245.00px;font-size:13px;line-height:16px;transform:scale(1.1046,1.04);">годности</span>
<div class="c" style="left:1188.4px;top:222px;width:27.59999999999991px;height:46px"><span class="t" style="left:-2.91px;top:7.50px;font-size:13px;line-height:16px;transform:scale(1.1075,1.04);">Реф</span></div>
<div class="c" style="left:1188.4px;top:222px;width:27.399999999999864px;height:46px"><span class="t" style="left:-9.76px;top:23.00px;font-size:13px;line-height:16px;letter-spacing:0.300px;transform:scale(1.0000,1.04);">наценка</span></div>
<span class="t" style="left:1231.09px;top:229.50px;font-size:13px;line-height:16px;transform:scale(1.0013,1.04);">Реф.</span>
<span class="t" style="left:1230.59px;top:245.00px;font-size:13px;line-height:16px;transform:scale(1.0683,1.04);">цена</span>
<span class="t" style="left:1289.34px;top:229.50px;font-size:13px;line-height:16px;transform:scale(1.0182,1.04);">Реф.</span>
<span class="t" style="left:1291.84px;top:245.00px;font-size:13px;line-height:16px;letter-spacing:0.025px;transform:scale(1.1200,1.04);">опт.</span>
<div class="c" style="left:1335px;top:222px;width:22.90000000000009px;height:46px"><span class="t" style="left:-13.43px;top:15.50px;font-size:13px;line-height:16px;letter-spacing:0.200px;transform:scale(1.0000,1.04);">Отклон.</span></div>
<svg style="left:430px;top:244px" width="8" height="5"><path d="M0.3 0H7.2L3.75 4.4Z" fill="#000"/></svg>
<div class="c" style="left:440px;top:271.0px;width:180.70000000000005px;height:17.180000000000007px"><span class="t" style="left:1.69px;top:0.75px;font-size:13px;line-height:16px;transform:scale(1.0245,1.04);">REFER INVEST Оптовая аптека</span></div>
<div class="c" style="left:622.2px;top:271.0px;width:217.5999999999999px;height:17.180000000000007px"><span class="t" style="left:1.89px;top:0.75px;font-size:13px;line-height:16px;transform:scale(0.9965,1.04);">Бетадин, 100 мг/1 мл, 1000 мл, флак.</span></div>
<span class="t" style="left:882.02px;top:271.75px;font-size:13px;line-height:16px;font-weight:700;word-spacing:0;transform:scale(0.8800,1.04);">0</span>
<span class="t" style="left:912.59px;top:271.75px;font-size:13px;line-height:16px;transform:scale(0.9454,1.04);">0,00</span>
<span class="t" style="left:994.03px;top:271.75px;font-size:13px;line-height:16px;font-weight:700;word-spacing:0;transform:scale(1.0200,1.04);">0,00</span>
<span class="t" style="left:1069.88px;top:271.75px;font-size:13px;line-height:16px;transform:scale(0.9350,1.04);">0,00</span>
<div class="c" style="left:1098px;top:271.0px;width:24.5px;height:17.180000000000007px"><span class="t" style="left:-1.72px;top:0.75px;font-size:13px;line-height:16px;transform:scale(0.9350,1.04);">0,00</span></div>
<span class="t" style="left:1123.59px;top:271.75px;font-size:13px;line-height:16px;transform:scale(0.9247,1.04);">01.06.2027</span>
<span class="t" style="left:1191.09px;top:271.75px;font-size:13px;line-height:16px;transform:scale(0.9256,1.04);">0,00</span>
<span class="t" style="left:1248.48px;top:271.75px;font-size:13px;line-height:16px;transform:scale(0.9350,1.04);">0,00</span>
<span class="t" style="left:1307.98px;top:271.75px;font-size:13px;line-height:16px;transform:scale(0.9350,1.04);">0,00</span>
<div class="c" style="left:1335px;top:271.0px;width:24px;height:17.180000000000007px"><span class="t" style="left:-1.72px;top:0.75px;font-size:13px;line-height:16px;transform:scale(0.9350,1.04);">0,00</span></div>
<div class="c" style="left:440px;top:289.18px;width:180.70000000000005px;height:17.180000000000007px"><span class="t" style="left:1.69px;top:0.75px;font-size:13px;line-height:16px;transform:scale(1.0245,1.04);">REFER INVEST Оптовая аптека</span></div>
<div class="c" style="left:622.2px;top:289.18px;width:217.5999999999999px;height:17.180000000000007px"><span class="t" style="left:1.89px;top:0.75px;font-size:13px;line-height:16px;transform:scale(0.9965,1.04);">Бетадин, 100 мг/1 мл, 1000 мл, флак.</span></div>
<span class="t" style="left:882.02px;top:289.93px;font-size:13px;line-height:16px;font-weight:700;word-spacing:0;transform:scale(0.8800,1.04);">0</span>
<span class="t" style="left:912.59px;top:289.93px;font-size:13px;line-height:16px;transform:scale(0.9454,1.04);">0,00</span>
<span class="t" style="left:994.03px;top:289.93px;font-size:13px;line-height:16px;font-weight:700;word-spacing:0;transform:scale(1.0200,1.04);">0,00</span>
<span class="t" style="left:1069.88px;top:289.93px;font-size:13px;line-height:16px;transform:scale(0.9350,1.04);">0,00</span>
<div class="c" style="left:1098px;top:289.18px;width:24.5px;height:17.180000000000007px"><span class="t" style="left:-1.72px;top:0.75px;font-size:13px;line-height:16px;transform:scale(0.9350,1.04);">0,00</span></div>
<span class="t" style="left:1123.59px;top:289.93px;font-size:13px;line-height:16px;transform:scale(0.9247,1.04);">01.06.2027</span>
<span class="t" style="left:1191.09px;top:289.93px;font-size:13px;line-height:16px;transform:scale(0.9256,1.04);">0,00</span>
<span class="t" style="left:1248.48px;top:289.93px;font-size:13px;line-height:16px;transform:scale(0.9350,1.04);">0,00</span>
<span class="t" style="left:1307.98px;top:289.93px;font-size:13px;line-height:16px;transform:scale(0.9350,1.04);">0,00</span>
<div class="c" style="left:1335px;top:289.18px;width:24px;height:17.180000000000007px"><span class="t" style="left:-1.72px;top:0.75px;font-size:13px;line-height:16px;transform:scale(0.9350,1.04);">0,00</span></div>
<div class="c" style="left:440px;top:307.36px;width:180.70000000000005px;height:17.180000000000007px"><span class="t" style="left:1.69px;top:0.75px;font-size:13px;line-height:16px;transform:scale(0.9842,1.04);">САМФАРМ 100%</span></div>
<div class="c" style="left:622.2px;top:307.36px;width:217.5999999999999px;height:17.180000000000007px"><span class="t" style="left:1.89px;top:0.75px;font-size:13px;line-height:16px;transform:scale(0.9965,1.04);">Бетадин, 100 мг/1 мл, 1000 мл, флак.</span></div>
<span class="t" style="left:882.02px;top:308.11px;font-size:13px;line-height:16px;font-weight:700;word-spacing:0;transform:scale(0.8800,1.04);">0</span>
<span class="t" style="left:912.59px;top:308.11px;font-size:13px;line-height:16px;transform:scale(0.9454,1.04);">0,00</span>
<span class="t" style="left:951.19px;top:308.11px;font-size:13px;line-height:16px;font-weight:700;word-spacing:0;transform:scale(1.0550,1.04);">198 240,00</span>
<span class="t" style="left:1034.38px;top:308.11px;font-size:13px;line-height:16px;transform:scale(0.9220,1.04);">198 240,00</span>
<div class="c" style="left:1098px;top:307.36px;width:24.5px;height:17.180000000000007px"><span class="t" style="left:-1.72px;top:0.75px;font-size:13px;line-height:16px;transform:scale(0.9350,1.04);">0,00</span></div>
<span class="t" style="left:1123.59px;top:308.11px;font-size:13px;line-height:16px;transform:scale(0.9247,1.04);">01.02.2027</span>
<span class="t" style="left:1191.09px;top:308.11px;font-size:13px;line-height:16px;transform:scale(0.9256,1.04);">0,00</span>
<span class="t" style="left:1248.48px;top:308.11px;font-size:13px;line-height:16px;transform:scale(0.9350,1.04);">0,00</span>
<span class="t" style="left:1307.98px;top:308.11px;font-size:13px;line-height:16px;transform:scale(0.9350,1.04);">0,00</span>
<div class="c" style="left:1335px;top:307.36px;width:24px;height:17.180000000000007px"><span class="t" style="left:-1.72px;top:0.75px;font-size:13px;line-height:16px;transform:scale(0.9350,1.04);">0,00</span></div>
<div class="c" style="left:440px;top:325.54px;width:180.70000000000005px;height:17.180000000000007px"><span class="t" style="left:1.69px;top:0.75px;font-size:13px;line-height:16px;transform:scale(1.0083,1.04);">САЛОМАТЛИК</span></div>
<div class="c" style="left:622.2px;top:325.54px;width:217.5999999999999px;height:17.180000000000007px"><span class="t" style="left:1.89px;top:0.75px;font-size:13px;line-height:16px;transform:scale(0.9965,1.04);">Бетадин, 100 мг/1 мл, 1000 мл, флак.</span></div>
<span class="t" style="left:882.02px;top:326.29px;font-size:13px;line-height:16px;font-weight:700;word-spacing:0;transform:scale(0.8800,1.04);">0</span>
<span class="t" style="left:912.59px;top:326.29px;font-size:13px;line-height:16px;transform:scale(0.9454,1.04);">0,00</span>
<span class="t" style="left:951.19px;top:326.29px;font-size:13px;line-height:16px;font-weight:700;word-spacing:0;transform:scale(1.0550,1.04);">198 549,00</span>
<span class="t" style="left:1034.38px;top:326.29px;font-size:13px;line-height:16px;transform:scale(0.9220,1.04);">198 549,00</span>
<div class="c" style="left:1098px;top:325.54px;width:24.5px;height:17.180000000000007px"><span class="t" style="left:-1.72px;top:0.75px;font-size:13px;line-height:16px;transform:scale(0.9350,1.04);">0,00</span></div>
<span class="t" style="left:1123.59px;top:326.29px;font-size:13px;line-height:16px;transform:scale(0.9247,1.04);">01.06.2027</span>
<span class="t" style="left:1191.09px;top:326.29px;font-size:13px;line-height:16px;transform:scale(0.9256,1.04);">0,00</span>
<span class="t" style="left:1248.48px;top:326.29px;font-size:13px;line-height:16px;transform:scale(0.9350,1.04);">0,00</span>
<span class="t" style="left:1307.98px;top:326.29px;font-size:13px;line-height:16px;transform:scale(0.9350,1.04);">0,00</span>
<div class="c" style="left:1335px;top:325.54px;width:24px;height:17.180000000000007px"><span class="t" style="left:-1.72px;top:0.75px;font-size:13px;line-height:16px;transform:scale(0.9350,1.04);">0,00</span></div>
<div class="c" style="left:440px;top:343.72px;width:180.70000000000005px;height:17.180000000000007px"><span class="t" style="left:1.69px;top:0.75px;font-size:13px;line-height:16px;color:#fff;transform:scale(1.0077,1.04);">МАДИНА ФАРМ ТАШКЕНТ ООО</span></div>
<div class="c" style="left:622.2px;top:343.72px;width:217.5999999999999px;height:17.180000000000007px"><span class="t" style="left:1.89px;top:0.75px;font-size:13px;line-height:16px;transform:scale(0.9965,1.04);">Бетадин, 100 мг/1 мл, 1000 мл, флак.</span></div>
<span class="t" style="left:882.02px;top:344.47px;font-size:13px;line-height:16px;font-weight:700;word-spacing:0;transform:scale(0.8800,1.04);">0</span>
<span class="t" style="left:912.59px;top:344.47px;font-size:13px;line-height:16px;transform:scale(0.9454,1.04);">0,00</span>
<span class="t" style="left:951.19px;top:344.47px;font-size:13px;line-height:16px;font-weight:700;word-spacing:0;transform:scale(1.0550,1.04);">199 690,00</span>
<span class="t" style="left:1034.38px;top:344.47px;font-size:13px;line-height:16px;transform:scale(0.9220,1.04);">199 690,00</span>
<div class="c" style="left:1098px;top:343.72px;width:24.5px;height:17.180000000000007px"><span class="t" style="left:-1.72px;top:0.75px;font-size:13px;line-height:16px;transform:scale(0.9350,1.04);">0,00</span></div>
<span class="t" style="left:1123.59px;top:344.47px;font-size:13px;line-height:16px;transform:scale(0.9247,1.04);">01.06.2027</span>
<span class="t" style="left:1191.09px;top:344.47px;font-size:13px;line-height:16px;transform:scale(0.9256,1.04);">0,00</span>
<span class="t" style="left:1248.48px;top:344.47px;font-size:13px;line-height:16px;transform:scale(0.9350,1.04);">0,00</span>
<span class="t" style="left:1307.98px;top:344.47px;font-size:13px;line-height:16px;transform:scale(0.9350,1.04);">0,00</span>
<div class="c" style="left:1335px;top:343.72px;width:24px;height:17.180000000000007px"><span class="t" style="left:-1.72px;top:0.75px;font-size:13px;line-height:16px;transform:scale(0.9350,1.04);">0,00</span></div>
<div class="c" style="left:440px;top:361.9px;width:180.70000000000005px;height:17.180000000000007px"><span class="t" style="left:1.69px;top:0.75px;font-size:13px;line-height:16px;transform:scale(1.0131,1.04);">БЕК БАРАКА ФАРМ 100%</span></div>
<div class="c" style="left:622.2px;top:361.9px;width:217.5999999999999px;height:17.180000000000007px"><span class="t" style="left:1.89px;top:0.75px;font-size:13px;line-height:16px;transform:scale(0.9965,1.04);">Бетадин, 100 мг/1 мл, 1000 мл, флак.</span></div>
<span class="t" style="left:882.02px;top:362.65px;font-size:13px;line-height:16px;font-weight:700;word-spacing:0;transform:scale(0.8800,1.04);">0</span>
<span class="t" style="left:912.59px;top:362.65px;font-size:13px;line-height:16px;transform:scale(0.9454,1.04);">0,00</span>
<span class="t" style="left:951.19px;top:362.65px;font-size:13px;line-height:16px;font-weight:700;word-spacing:0;transform:scale(1.0550,1.04);">199 691,00</span>
<span class="t" style="left:1034.38px;top:362.65px;font-size:13px;line-height:16px;transform:scale(0.9220,1.04);">199 691,00</span>
<div class="c" style="left:1098px;top:361.9px;width:24.5px;height:17.180000000000007px"><span class="t" style="left:-1.72px;top:0.75px;font-size:13px;line-height:16px;transform:scale(0.9350,1.04);">0,00</span></div>
<span class="t" style="left:1123.59px;top:362.65px;font-size:13px;line-height:16px;transform:scale(0.9247,1.04);">01.06.2027</span>
<span class="t" style="left:1191.09px;top:362.65px;font-size:13px;line-height:16px;transform:scale(0.9256,1.04);">0,00</span>
<span class="t" style="left:1248.48px;top:362.65px;font-size:13px;line-height:16px;transform:scale(0.9350,1.04);">0,00</span>
<span class="t" style="left:1307.98px;top:362.65px;font-size:13px;line-height:16px;transform:scale(0.9350,1.04);">0,00</span>
<div class="c" style="left:1335px;top:361.9px;width:24px;height:17.180000000000007px"><span class="t" style="left:-1.72px;top:0.75px;font-size:13px;line-height:16px;transform:scale(0.9350,1.04);">0,00</span></div>
<div class="c" style="left:440px;top:380.08px;width:180.70000000000005px;height:17.180000000000007px"><span class="t" style="left:1.69px;top:0.75px;font-size:13px;line-height:16px;transform:scale(0.9957,1.04);">BIOTEK FARM TASHKENT SPEC</span></div>
<div class="c" style="left:622.2px;top:380.08px;width:217.5999999999999px;height:17.180000000000007px"><span class="t" style="left:1.89px;top:0.75px;font-size:13px;line-height:16px;transform:scale(0.9965,1.04);">Бетадин, 100 мг/1 мл, 1000 мл, флак.</span></div>
<span class="t" style="left:882.02px;top:380.83px;font-size:13px;line-height:16px;font-weight:700;word-spacing:0;transform:scale(0.8800,1.04);">0</span>
<span class="t" style="left:912.59px;top:380.83px;font-size:13px;line-height:16px;transform:scale(0.9454,1.04);">0,00</span>
<span class="t" style="left:951.19px;top:380.83px;font-size:13px;line-height:16px;font-weight:700;word-spacing:0;transform:scale(1.0550,1.04);">199 692,00</span>
<span class="t" style="left:1034.38px;top:380.83px;font-size:13px;line-height:16px;transform:scale(0.9220,1.04);">199 692,00</span>
<div class="c" style="left:1098px;top:380.08px;width:24.5px;height:17.180000000000007px"><span class="t" style="left:-1.72px;top:0.75px;font-size:13px;line-height:16px;transform:scale(0.9350,1.04);">0,00</span></div>
<span class="t" style="left:1123.59px;top:380.83px;font-size:13px;line-height:16px;transform:scale(0.9247,1.04);">01.04.2027</span>
<span class="t" style="left:1191.09px;top:380.83px;font-size:13px;line-height:16px;transform:scale(0.9256,1.04);">0,00</span>
<span class="t" style="left:1248.48px;top:380.83px;font-size:13px;line-height:16px;transform:scale(0.9350,1.04);">0,00</span>
<span class="t" style="left:1307.98px;top:380.83px;font-size:13px;line-height:16px;transform:scale(0.9350,1.04);">0,00</span>
<div class="c" style="left:1335px;top:380.08px;width:24px;height:17.180000000000007px"><span class="t" style="left:-1.72px;top:0.75px;font-size:13px;line-height:16px;transform:scale(0.9350,1.04);">0,00</span></div>
<div class="c" style="left:440px;top:398.26px;width:180.70000000000005px;height:17.180000000000007px"><span class="t" style="left:1.69px;top:0.75px;font-size:13px;line-height:16px;transform:scale(0.9957,1.04);">BIOTEK FARM TASHKENT SPEC</span></div>
<div class="c" style="left:622.2px;top:398.26px;width:217.5999999999999px;height:17.180000000000007px"><span class="t" style="left:1.89px;top:0.75px;font-size:13px;line-height:16px;transform:scale(0.9965,1.04);">Бетадин, 100 мг/1 мл, 1000 мл, флак.</span></div>
<span class="t" style="left:882.02px;top:399.01px;font-size:13px;line-height:16px;font-weight:700;word-spacing:0;transform:scale(0.8800,1.04);">0</span>
<span class="t" style="left:912.59px;top:399.01px;font-size:13px;line-height:16px;transform:scale(0.9454,1.04);">0,00</span>
<span class="t" style="left:951.19px;top:399.01px;font-size:13px;line-height:16px;font-weight:700;word-spacing:0;transform:scale(1.0550,1.04);">199 692,00</span>
<span class="t" style="left:1034.38px;top:399.01px;font-size:13px;line-height:16px;transform:scale(0.9220,1.04);">199 692,00</span>
<div class="c" style="left:1098px;top:398.26px;width:24.5px;height:17.180000000000007px"><span class="t" style="left:-1.72px;top:0.75px;font-size:13px;line-height:16px;transform:scale(0.9350,1.04);">0,00</span></div>
<span class="t" style="left:1123.59px;top:399.01px;font-size:13px;line-height:16px;transform:scale(0.9247,1.04);">01.06.2027</span>
<span class="t" style="left:1191.09px;top:399.01px;font-size:13px;line-height:16px;transform:scale(0.9256,1.04);">0,00</span>
<span class="t" style="left:1248.48px;top:399.01px;font-size:13px;line-height:16px;transform:scale(0.9350,1.04);">0,00</span>
<span class="t" style="left:1307.98px;top:399.01px;font-size:13px;line-height:16px;transform:scale(0.9350,1.04);">0,00</span>
<div class="c" style="left:1335px;top:398.26px;width:24px;height:17.180000000000007px"><span class="t" style="left:-1.72px;top:0.75px;font-size:13px;line-height:16px;transform:scale(0.9350,1.04);">0,00</span></div>
<div class="c" style="left:440px;top:416.44px;width:180.70000000000005px;height:17.180000000000007px"><span class="t" style="left:1.69px;top:0.75px;font-size:13px;line-height:16px;transform:scale(0.9957,1.04);">BIOTEK FARM TASHKENT SPEC</span></div>
<div class="c" style="left:622.2px;top:416.44px;width:217.5999999999999px;height:17.180000000000007px"><span class="t" style="left:1.89px;top:0.75px;font-size:13px;line-height:16px;transform:scale(0.9965,1.04);">Бетадин, 100 мг/1 мл, 1000 мл, флак.</span></div>
<span class="t" style="left:882.02px;top:417.19px;font-size:13px;line-height:16px;font-weight:700;word-spacing:0;transform:scale(0.8800,1.04);">0</span>
<span class="t" style="left:912.59px;top:417.19px;font-size:13px;line-height:16px;transform:scale(0.9454,1.04);">0,00</span>
<span class="t" style="left:951.19px;top:417.19px;font-size:13px;line-height:16px;font-weight:700;word-spacing:0;transform:scale(1.0550,1.04);">199 692,00</span>
<span class="t" style="left:1034.38px;top:417.19px;font-size:13px;line-height:16px;transform:scale(0.9220,1.04);">199 692,00</span>
<div class="c" style="left:1098px;top:416.44px;width:24.5px;height:17.180000000000007px"><span class="t" style="left:-1.72px;top:0.75px;font-size:13px;line-height:16px;transform:scale(0.9350,1.04);">0,00</span></div>
<span class="t" style="left:1123.59px;top:417.19px;font-size:13px;line-height:16px;transform:scale(0.9247,1.04);">01.02.2027</span>
<span class="t" style="left:1191.09px;top:417.19px;font-size:13px;line-height:16px;transform:scale(0.9256,1.04);">0,00</span>
<span class="t" style="left:1248.48px;top:417.19px;font-size:13px;line-height:16px;transform:scale(0.9350,1.04);">0,00</span>
<span class="t" style="left:1307.98px;top:417.19px;font-size:13px;line-height:16px;transform:scale(0.9350,1.04);">0,00</span>
<div class="c" style="left:1335px;top:416.44px;width:24px;height:17.180000000000007px"><span class="t" style="left:-1.72px;top:0.75px;font-size:13px;line-height:16px;transform:scale(0.9350,1.04);">0,00</span></div>
<div class="c" style="left:440px;top:434.62px;width:180.70000000000005px;height:17.180000000000007px"><span class="t" style="left:1.69px;top:0.75px;font-size:13px;line-height:16px;transform:scale(0.9757,1.04);">BIOTEK FARM VODIY SPEC 100%</span></div>
<div class="c" style="left:622.2px;top:434.62px;width:217.5999999999999px;height:17.180000000000007px"><span class="t" style="left:1.89px;top:0.75px;font-size:13px;line-height:16px;transform:scale(0.9965,1.04);">Бетадин, 100 мг/1 мл, 1000 мл, флак.</span></div>
<span class="t" style="left:882.02px;top:435.37px;font-size:13px;line-height:16px;font-weight:700;word-spacing:0;transform:scale(0.8800,1.04);">0</span>
<span class="t" style="left:912.59px;top:435.37px;font-size:13px;line-height:16px;transform:scale(0.9454,1.04);">0,00</span>
<span class="t" style="left:951.19px;top:435.37px;font-size:13px;line-height:16px;font-weight:700;word-spacing:0;transform:scale(1.0550,1.04);">199 692,00</span>
<span class="t" style="left:1034.38px;top:435.37px;font-size:13px;line-height:16px;transform:scale(0.9220,1.04);">199 692,00</span>
<div class="c" style="left:1098px;top:434.62px;width:24.5px;height:17.180000000000007px"><span class="t" style="left:-1.72px;top:0.75px;font-size:13px;line-height:16px;transform:scale(0.9350,1.04);">0,00</span></div>
<span class="t" style="left:1123.59px;top:435.37px;font-size:13px;line-height:16px;transform:scale(0.9247,1.04);">01.06.2027</span>
<span class="t" style="left:1191.09px;top:435.37px;font-size:13px;line-height:16px;transform:scale(0.9256,1.04);">0,00</span>
<span class="t" style="left:1248.48px;top:435.37px;font-size:13px;line-height:16px;transform:scale(0.9350,1.04);">0,00</span>
<span class="t" style="left:1307.98px;top:435.37px;font-size:13px;line-height:16px;transform:scale(0.9350,1.04);">0,00</span>
<div class="c" style="left:1335px;top:434.62px;width:24px;height:17.180000000000007px"><span class="t" style="left:-1.72px;top:0.75px;font-size:13px;line-height:16px;transform:scale(0.9350,1.04);">0,00</span></div>
<div class="c" style="left:440px;top:452.8px;width:180.70000000000005px;height:17.180000000000007px"><span class="t" style="left:1.69px;top:0.75px;font-size:13px;line-height:16px;transform:scale(0.9757,1.04);">BIOTEK FARM VODIY SPEC 100%</span></div>
<div class="c" style="left:622.2px;top:452.8px;width:217.5999999999999px;height:17.180000000000007px"><span class="t" style="left:1.89px;top:0.75px;font-size:13px;line-height:16px;transform:scale(0.9965,1.04);">Бетадин, 100 мг/1 мл, 1000 мл, флак.</span></div>
<span class="t" style="left:882.02px;top:453.55px;font-size:13px;line-height:16px;font-weight:700;word-spacing:0;transform:scale(0.8800,1.04);">0</span>
<span class="t" style="left:912.59px;top:453.55px;font-size:13px;line-height:16px;transform:scale(0.9454,1.04);">0,00</span>
<span class="t" style="left:951.19px;top:453.55px;font-size:13px;line-height:16px;font-weight:700;word-spacing:0;transform:scale(1.0550,1.04);">199 692,00</span>
<span class="t" style="left:1034.38px;top:453.55px;font-size:13px;line-height:16px;transform:scale(0.9220,1.04);">199 692,00</span>
<div class="c" style="left:1098px;top:452.8px;width:24.5px;height:17.180000000000007px"><span class="t" style="left:-1.72px;top:0.75px;font-size:13px;line-height:16px;transform:scale(0.9350,1.04);">0,00</span></div>
<span class="t" style="left:1123.59px;top:453.55px;font-size:13px;line-height:16px;transform:scale(0.9247,1.04);">01.02.2027</span>
<span class="t" style="left:1191.09px;top:453.55px;font-size:13px;line-height:16px;transform:scale(0.9256,1.04);">0,00</span>
<span class="t" style="left:1248.48px;top:453.55px;font-size:13px;line-height:16px;transform:scale(0.9350,1.04);">0,00</span>
<span class="t" style="left:1307.98px;top:453.55px;font-size:13px;line-height:16px;transform:scale(0.9350,1.04);">0,00</span>
<div class="c" style="left:1335px;top:452.8px;width:24px;height:17.180000000000007px"><span class="t" style="left:-1.72px;top:0.75px;font-size:13px;line-height:16px;transform:scale(0.9350,1.04);">0,00</span></div>
<svg style="left:431px;top:346.0px" width="7" height="11"><path d="M0.6 0.2V10.2L6 5.2Z" fill="#000"/></svg>
<svg style="left:523.4px;top:344.7px" width="14" height="21" viewBox="0 0 14 21"><path d="M1 1V15.4L4.5 12.2L7.1 18.1L9.5 17L6.9 11.2H11.6Z" fill="#fff" stroke="#000" stroke-width="1.1" stroke-linejoin="round"/></svg>
<span class="t" style="left:441.79px;top:487.50px;font-size:13px;line-height:16px;transform:scale(0.9375,1.04);">111</span>
<span class="t" style="left:996.28px;top:487.50px;font-size:13px;line-height:16px;transform:scale(0.9350,1.04);">0,00</span>
<span class="t" style="left:1069.73px;top:487.50px;font-size:13px;line-height:16px;transform:scale(0.9350,1.04);">0,00</span>
<span class="t" style="left:453.09px;top:508.40px;font-size:13px;line-height:16px;letter-spacing:0.405px;transform:scale(1.1200,1.04);">Тип</span>
<span class="t" style="left:547.09px;top:508.40px;font-size:13px;line-height:16px;transform:scale(1.0679,1.04);">Прайс</span>
<span class="t" style="left:645.59px;top:508.40px;font-size:13px;line-height:16px;letter-spacing:0.029px;transform:scale(1.1200,1.04);">Нагрузка</span>
<span class="t" style="left:717.79px;top:508.40px;font-size:13px;line-height:16px;transform:scale(1.0664,1.04);">Срок годности</span>
<span class="t" style="left:832.29px;top:508.40px;font-size:13px;line-height:16px;transform:scale(1.0747,1.04);">Дата прайса</span>
<div class="in" style="left:433.4px;top:525px;width:81.6px;height:21.5px"></div>
<div class="in" style="left:531.6px;top:525px;width:80.4px;height:21.5px"></div>
<div class="in" style="left:627.6px;top:525px;width:80.0px;height:21.5px"></div>
<div class="in" style="left:722.2px;top:525px;width:80.8px;height:21.5px"></div>
<div class="in" style="left:819px;top:525px;width:130.7px;height:21.5px"></div>
<span class="t" style="left:724.89px;top:527.00px;font-size:13px;line-height:16px;transform:scale(0.9071,1.04);">01.06.2027</span>
<span class="t" style="left:820.89px;top:527.00px;font-size:13px;line-height:16px;transform:scale(0.9368,1.04);">15.01.2026 8:16:34</span>
<svg style="left:0;top:0" width="1378" height="676"><line x1="435" y1="57.8" x2="560" y2="119.3" stroke="#ff0000" stroke-width="10"/><path d="M565 102L549 133.6H589Z" fill="#ff0000"/></svg>
</div></body></html>
